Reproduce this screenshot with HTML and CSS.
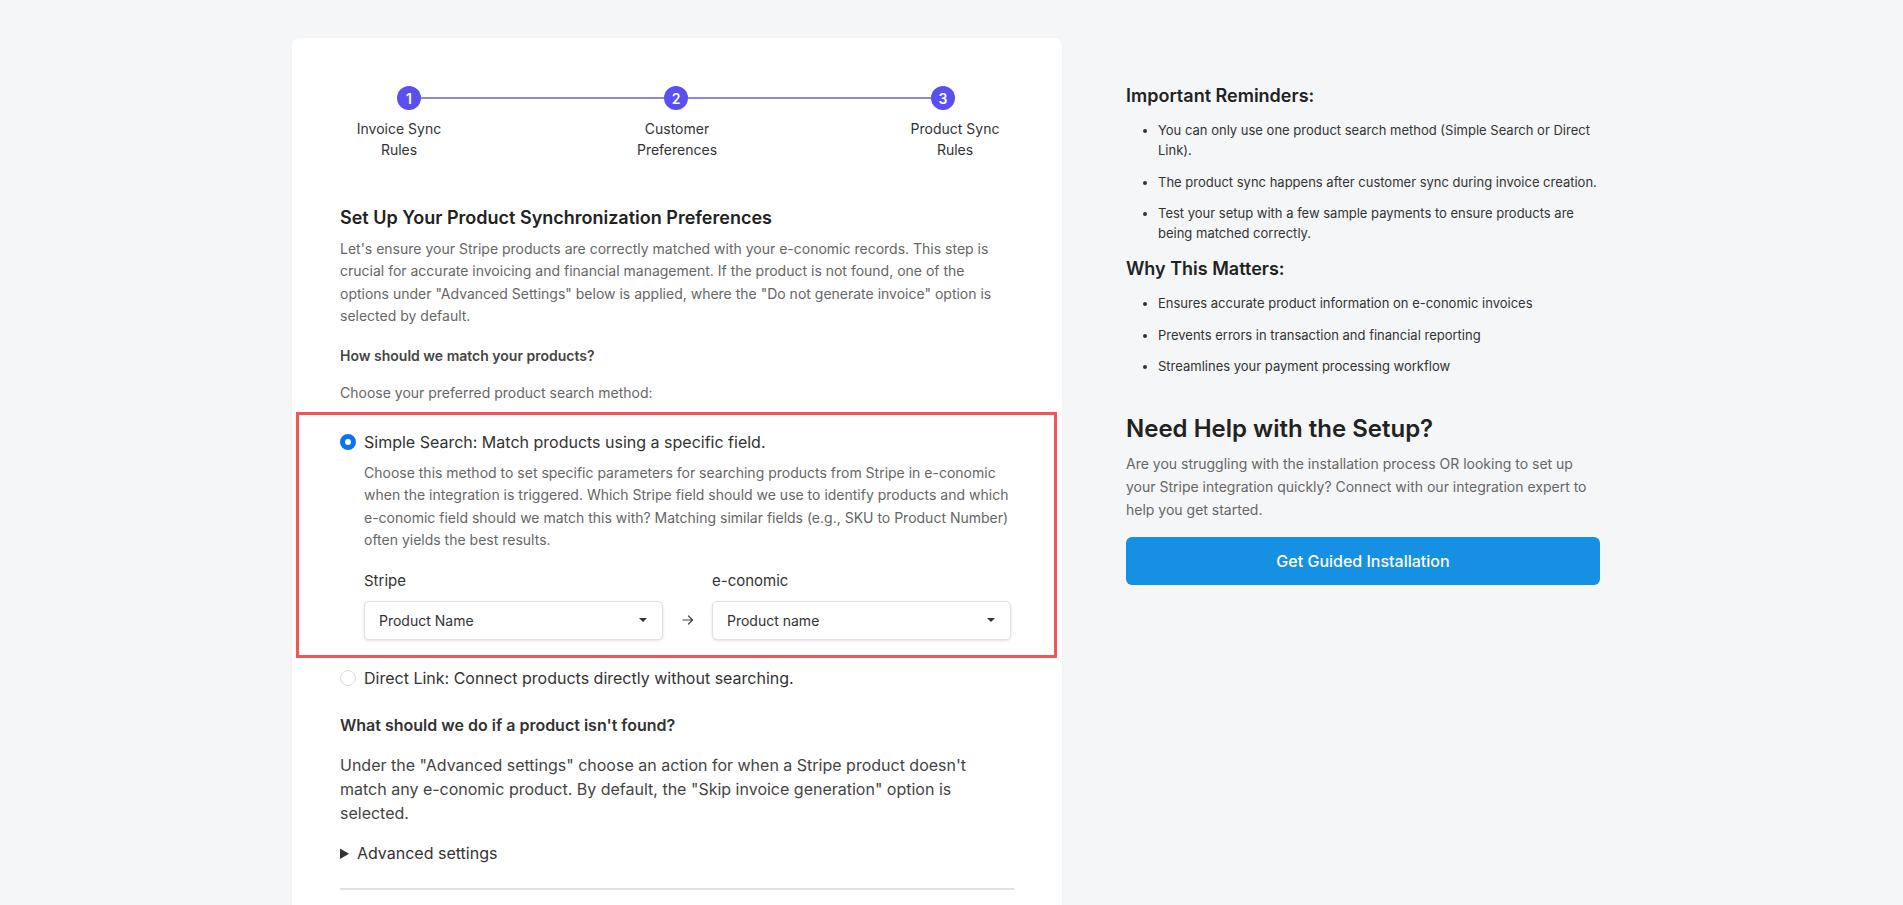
FILE: index.html
```html
<!DOCTYPE html>
<html lang="en">
<head>
<meta charset="utf-8">
<title>Product Sync Rules</title>
<link rel="stylesheet" href="styles.css">
</head>
<body>
<div class="page">
  <main class="card">
    <div class="stepper">
      <div class="step-track">
        <span class="step-dot">1</span>
        <span class="step-line"></span>
        <span class="step-dot">2</span>
        <span class="step-line"></span>
        <span class="step-dot">3</span>
      </div>
      <div class="step-labels">
        <span class="step-label">Invoice Sync Rules</span>
        <span class="step-label">Customer Preferences</span>
        <span class="step-label">Product Sync Rules</span>
      </div>
    </div>

    <h2 class="section-title">Set Up Your Product Synchronization Preferences</h2>
    <p class="intro">Let's ensure your Stripe products are correctly matched with your e-conomic records. This step is crucial for accurate invoicing and financial management. If the product is not found, one of the options under "Advanced Settings" below is applied, where the "Do not generate invoice" option is selected by default.</p>

    <h4 class="sub-title">How should we match your products?</h4>
    <p class="choose">Choose your preferred product search method:</p>

    <div class="highlight">
      <label class="option">
        <input type="radio" name="method" class="radio" checked>
        <span class="option-text">Simple Search: Match products using a specific field.</span>
      </label>
      <div class="option-body">
        <p class="option-desc">Choose this method to set specific parameters for searching products from Stripe in e-conomic when the integration is triggered. Which Stripe field should we use to identify products and which e-conomic field should we match this with? Matching similar fields (e.g., SKU to Product Number) often yields the best results.</p>
        <div class="mapping">
          <span class="map-label">Stripe</span>
          <span></span>
          <span class="map-label">e-conomic</span>
          <div class="select">
            <span>Product Name</span>
            <svg class="caret" width="8" height="4" viewBox="0 0 8 4"><path d="M0 0h8L4 4z" fill="#333"/></svg>
          </div>
          <span class="map-arrow">
            <svg width="12" height="10" viewBox="0 0 12 10"><path d="M1 5h9.5M6.5 1l4 4-4 4" fill="none" stroke="#444" stroke-width="1.2" stroke-linecap="round" stroke-linejoin="round"/></svg>
          </span>
          <div class="select">
            <span>Product name</span>
            <svg class="caret" width="8" height="4" viewBox="0 0 8 4"><path d="M0 0h8L4 4z" fill="#333"/></svg>
          </div>
        </div>
      </div>
    </div>

    <label class="option option-plain">
      <input type="radio" name="method" class="radio" disabled>
      <span class="option-text">Direct Link: Connect products directly without searching.</span>
    </label>

    <h4 class="sub-title-lg">What should we do if a product isn't found?</h4>
    <p class="notfound">Under the "Advanced settings" choose an action for when a Stripe product doesn't match any e-conomic product. By default, the "Skip invoice generation" option is selected.</p>

    <details class="advanced">
      <summary>Advanced settings</summary>
    </details>

    <hr class="divider">
  </main>

  <aside class="side">
    <h3 class="side-title">Important Reminders:</h3>
    <ul class="side-list">
      <li>You can only use one product search method (Simple Search or Direct Link).</li>
      <li>The product sync happens after customer sync during invoice creation.</li>
      <li>Test your setup with a few sample payments to ensure products are being matched correctly.</li>
    </ul>
    <h3 class="side-title side-title-2">Why This Matters:</h3>
    <ul class="side-list">
      <li>Ensures accurate product information on e-conomic invoices</li>
      <li>Prevents errors in transaction and financial reporting</li>
      <li>Streamlines your payment processing workflow</li>
    </ul>
    <h2 class="help-title">Need Help with the Setup?</h2>
    <p class="help-text">Are you struggling with the installation process OR looking to set up your Stripe integration quickly? Connect with our integration expert to help you get started.</p>
    <button class="guided-btn" type="button">Get Guided Installation</button>
  </aside>
</div>
</body>
</html>
```

FILE: styles.css
```css
* { box-sizing: border-box; }

html, body {
  margin: 0;
  padding: 0;
}

body {
  background: #f5f6f8;
  font-family: Inter, "Noto Sans", sans-serif;
  color: #333;
  overflow: hidden;
  height: 905px;
}

.page {
  display: flex;
  align-items: flex-start;
  gap: 64px;
  width: 1308px;
  margin: 38px 0 0 292px;
}

.card {
  width: 770px;
  flex: none;
  background: #fff;
  border-radius: 6px;
  box-shadow: 0 0 2px rgba(0, 0, 0, 0.05);
  padding: 48px 48px 200px;
}

/* Stepper */
.step-track {
  display: flex;
  align-items: center;
  padding: 0 59px 0 57px;
}

.step-dot {
  width: 24px;
  height: 24px;
  border-radius: 50%;
  background: #5a4ff0;
  color: #fff;
  font-size: 14px;
  font-weight: 600;
  display: flex;
  align-items: center;
  justify-content: center;
  flex: none;
}

.step-line {
  flex: 1;
  height: 2px;
  background: #8b84f1;
}

.step-labels {
  display: flex;
  justify-content: space-between;
  margin-top: 8px;
}

.step-label {
  width: 118px;
  text-align: center;
  font-size: 14px;
  line-height: 21px;
  color: #333;
}

/* Intro */
.section-title {
  margin: 44px 0 7px;
  font-size: 18px;
  line-height: 27px;
  font-weight: 600;
  color: #222;
}

.intro {
  margin: 0;
  font-size: 14px;
  line-height: 22.4px;
  color: #666;
}

.sub-title {
  margin: 18px 0 0;
  font-size: 14px;
  line-height: 20px;
  font-weight: 600;
  color: #444;
}

.choose {
  margin: 16px 0 0;
  font-size: 14px;
  line-height: 22.4px;
  color: #666;
}

/* Highlighted option */
.highlight {
  margin: 8px -43px 0 -44px;
  border: 3px solid #f05656;
  padding: 15px 40px 15px 41px;
}

.option {
  display: flex;
  align-items: center;
  gap: 8px;
}

.radio {
  appearance: none;
  -webkit-appearance: none;
  width: 16px;
  height: 16px;
  margin: 0;
  border-radius: 50%;
  border: 1px solid #dcdcdc;
  background: #fff;
  flex: none;
}

.radio:checked {
  border: 5px solid #0b72f0;
}

.option-text {
  font-size: 16px;
  line-height: 24px;
  color: #333;
}

.option-body {
  padding-left: 24px;
}

.option-desc {
  margin: 8px 0 0;
  font-size: 14px;
  line-height: 22.4px;
  color: #666;
}

.mapping {
  display: grid;
  grid-template-columns: 299px 49px 299px;
  margin-top: 18px;
}

.map-label {
  font-size: 15px;
  line-height: 22px;
  color: #333;
  margin-bottom: 9px;
}

.select {
  height: 39px;
  border: 1px solid #e2e2e2;
  border-radius: 5px;
  box-shadow: 0 1px 3px rgba(0, 0, 0, 0.12);
  background: #fff;
  display: flex;
  align-items: center;
  justify-content: space-between;
  padding: 0 15px 0 14px;
  font-size: 14px;
  color: #333;
}

.map-arrow {
  display: flex;
  align-items: center;
  justify-content: center;
}

.option-plain {
  margin-top: 8px;
}

.sub-title-lg {
  margin: 24px 0 0;
  font-size: 16px;
  line-height: 22px;
  font-weight: 600;
  color: #333;
}

.notfound {
  margin: 17px 0 0;
  font-size: 16px;
  line-height: 24px;
  color: #444;
}

.advanced {
  margin-top: 16px;
  font-size: 16px;
  line-height: 24px;
  color: #333;
}

.advanced summary {
  cursor: pointer;
}

.divider {
  margin: 23px 0 0;
  border: 0;
  height: 2px;
  background: #e0e0e0;
}

/* Side column */
.side {
  width: 474px;
  flex: none;
  padding-top: 46px;
}

.side-title {
  margin: 0;
  font-size: 18px;
  line-height: 24px;
  font-weight: 600;
  color: #222;
}

.side-title-2 {
  margin-top: 14px;
}

.side-list {
  margin: 12px 0 0;
  padding-left: 32px;
  font-size: 13px;
  line-height: 20px;
  color: #333;
}

.side-list li + li {
  margin-top: 11.5px;
}

.help-title {
  margin: 37px 0 0;
  font-size: 24px;
  line-height: 32px;
  font-weight: 600;
  color: #222;
}

.help-text {
  margin: 7px 0 0;
  font-size: 14px;
  line-height: 23px;
  color: #666;
}

.guided-btn {
  display: block;
  width: 100%;
  height: 48px;
  margin-top: 16px;
  border: 0;
  border-radius: 6px;
  background: #1590e2;
  color: #fff;
  font-family: Inter, "Noto Sans", sans-serif;
  font-size: 16px;
  font-weight: 500;
}
```
